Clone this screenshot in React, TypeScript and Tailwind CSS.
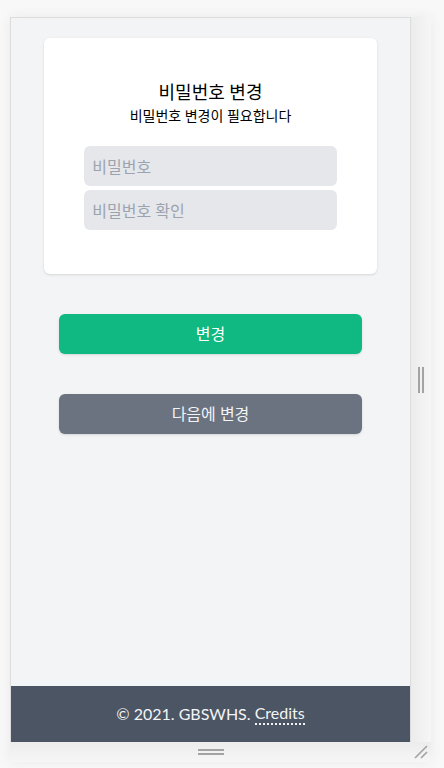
const App = () => {
    return (
        <div className="min-h-screen bg-[#f8f8f8] pl-[10px] pt-[17px] font-['Lato','Noto_Sans_CJK_KR',sans-serif]">
            <div className="flex w-[421px] flex-col shadow-[0_0_12px_rgba(0,0,0,0.06)]">
                <div className="flex">
                    <div className="flex h-[725px] w-[401px] flex-col border border-b-0 border-[#dcdcdc] bg-[#f3f4f6]">
                        <div className="mx-auto mt-5 w-5/6 rounded-md bg-white px-10 pb-10 pt-10 shadow">
                            <h1 className="text-center text-lg text-black">비밀번호 변경</h1>
                            <p className="text-center text-sm text-black">비밀번호 변경이 필요합니다</p>
                            <div className="mt-5">
                                <input type="password" placeholder="비밀번호" className="mb-1 h-10 w-full rounded-md bg-[#e5e7eb] px-2 text-base placeholder:text-[#9ca3af] focus:outline-none" />
                                <input type="password" placeholder="비밀번호 확인" className="mb-1 h-10 w-full rounded-md bg-[#e5e7eb] px-2 text-base placeholder:text-[#9ca3af] focus:outline-none" />
                            </div>
                        </div>
                        <button className="mx-12 mt-10 h-10 rounded-md bg-[#10b981] text-base text-white shadow-sm">변경</button>
                        <button className="mx-12 mt-10 h-10 rounded-md bg-[#6b7280] text-base text-[#f3f4f6] shadow-sm">다음에 변경</button>
                        <footer className="mt-auto flex h-14 items-center justify-center bg-[#4b5563] text-base text-[#f3f4f6]">
                            <span>© 2021. GBSWHS.&nbsp;</span>
                            <span className="border-b-2 border-dotted border-[#f3f4f6] leading-5">Credits</span>
                        </footer>
                    </div>
                    <div className="flex w-5 items-center justify-center gap-[2px] bg-gradient-to-r from-[#ececec] to-[#f6f6f6]">
                        <div className="h-[26px] w-[2px] bg-[#a3a3a3]" />
                        <div className="h-[26px] w-[2px] bg-[#a3a3a3]" />
                    </div>
                </div>
                <div className="flex h-5 bg-gradient-to-b from-[#ececec] to-[#f6f6f6]">
                    <div className="flex w-[401px] flex-col items-center justify-center gap-[2px]">
                        <div className="h-[2px] w-[26px] bg-[#a3a3a3]" />
                        <div className="h-[2px] w-[26px] bg-[#a3a3a3]" />
                    </div>
                    <div className="flex w-5 items-end justify-end pb-[3px] pr-[3px]">
                        <svg width="14" height="14" viewBox="0 0 14 14">
                            <path d="M1 13 L13 1 M7 13 L13 7" stroke="#a3a3a3" strokeWidth="1.6" />
                        </svg>
                    </div>
                </div>
            </div>
        </div>
    )
}

export default App;
